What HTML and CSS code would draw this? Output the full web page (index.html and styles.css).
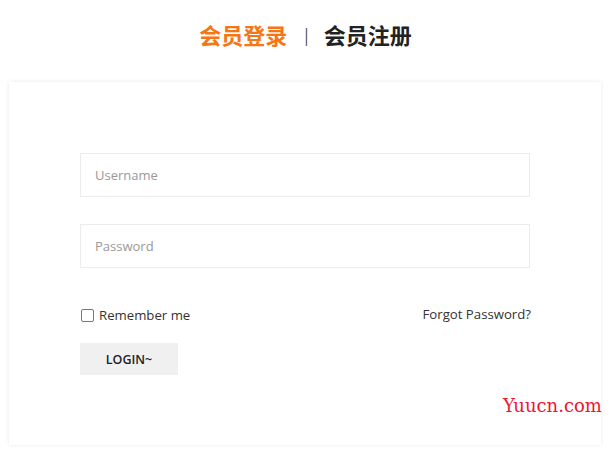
FILE: index.html
```html
<!DOCTYPE html>
<html lang="zh-CN">
<head>
    <meta charset="UTF-8">
    <title>会员登录</title>
    <link rel="stylesheet" href="styles.css">
</head>
<body>
    <div class="tabs">
        <a class="tab active">会员登录</a>
        <span class="sep">|</span>
        <a class="tab">会员注册</a>
    </div>
    <div class="panel">
        <form class="login-form">
            <input type="text" placeholder="Username">
            <input type="password" placeholder="Password">
            <div class="row">
                <label class="remember"><input type="checkbox"> Remember me</label>
                <a class="forgot">Forgot Password?</a>
            </div>
            <button type="button">LOGIN~</button>
        </form>
    </div>
    <div class="watermark">Yuucn.com</div>
</body>
</html>
```
FILE: styles.css
```css
body { margin: 0; background: #fff; font-family: "Open Sans", Arial, sans-serif; color: #333; position: relative; min-height: 461px; }
.tabs { display: flex; justify-content: center; align-items: center; height: 68px; padding-right: 2px; font-family: "Noto Sans CJK SC", sans-serif; font-size: 22px; font-weight: bold; }
.tab { color: #222; }
.tab.active { color: #f57614; }
.sep { font-size: 16px; font-weight: normal; color: #444; margin: 0 15px 0 17px; }
.panel { margin: 14px 0 0 9px; width: 592px; box-sizing: border-box; padding: 71px 71px 70px; background: #fff; box-shadow: 0 0 4px rgba(0,0,0,0.09); }
.login-form { display: flex; flex-direction: column; }
.login-form input[type="text"], .login-form input[type="password"] {
    height: 44px; box-sizing: border-box; padding: 0 14px; border: 1px solid #ececec; font-family: "Open Sans", sans-serif; font-size: 13px; margin-bottom: 27px; outline: none;
}
.login-form input::placeholder { color: #999; }
.row { display: flex; justify-content: space-between; align-items: center; font-size: 13.2px; margin-top: 10px; height: 20px; }
.remember { display: flex; align-items: center; gap: 5px; }
.remember input { appearance: none; margin: 1px 0 0 1px; width: 13px; height: 13px; border: 1px solid #777; border-radius: 2px; background: #fff; }
.forgot { margin-top: -3px; margin-right: -1px; }
button { margin-top: 18px; width: 98px; height: 32px; border: none; background: #f0f0f0; font-family: "Open Sans", sans-serif; font-weight: 600; font-size: 12.5px; color: #222; cursor: pointer; }
.watermark { position: absolute; left: 503px; top: 395px; font-family: "DejaVu Serif", serif; font-size: 18px; color: #f0142d; }
```
